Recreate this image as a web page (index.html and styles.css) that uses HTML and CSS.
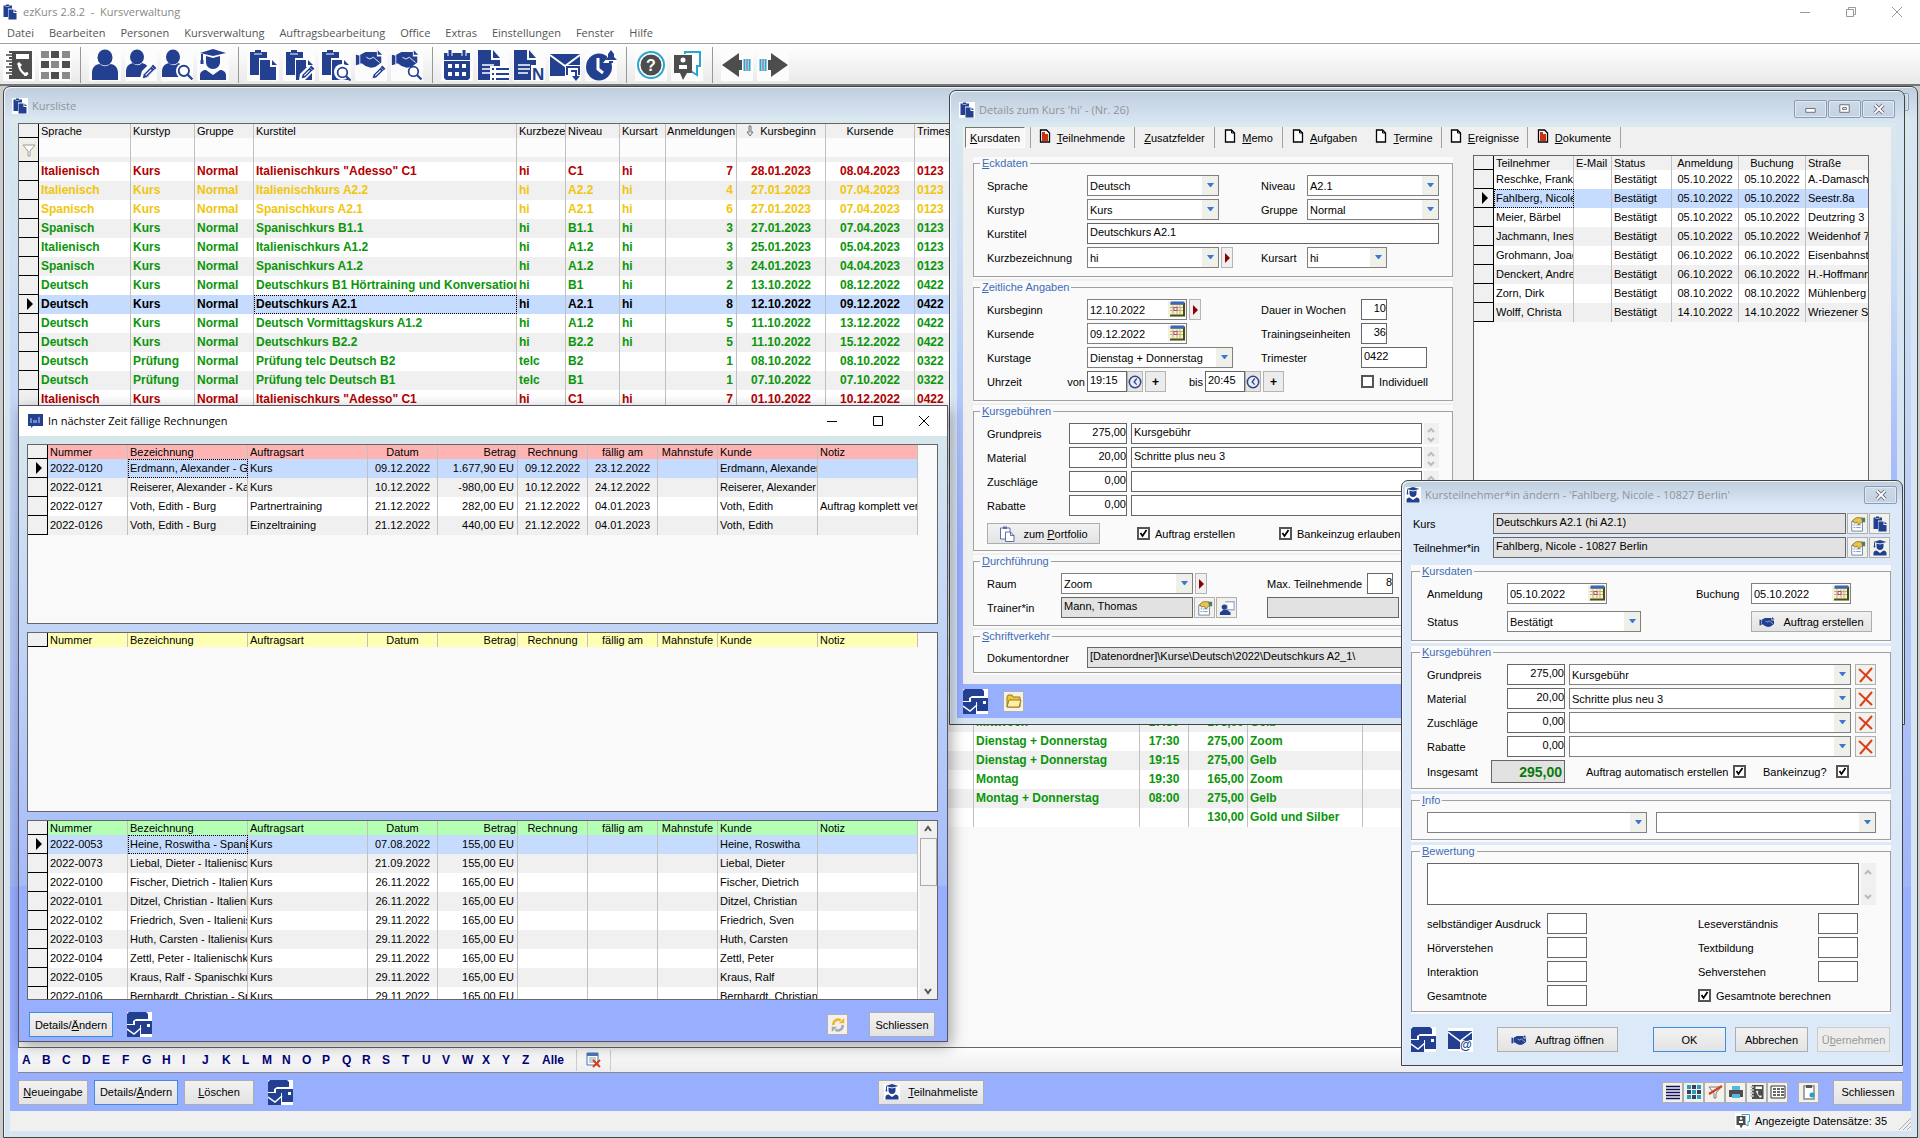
FILE: index.html
```html
<!DOCTYPE html>
<html lang="de">
<head>
<meta charset="utf-8">
<title>ezKurs 2.8.2 - Kursverwaltung</title>
<link rel="stylesheet" href="styles.css">
</head>
<body>
<svg class="defs" aria-hidden="true">
  <symbol id="i-book" viewBox="0 0 32 32"><path fill="#4d4d4d" d="M6 2h23v28H6z"/><path fill="#fff" d="M13 5h13v5H13z"/><path d="M3 6h6M3 12h6M3 18h6M3 24h6" stroke="#fff" stroke-width="4"/><path d="M3 6h6M3 12h6M3 18h6M3 24h6" stroke="#777" stroke-width="2"/><path d="M16 14c-1 4 3 11 8 12" stroke="#fff" stroke-width="2" fill="none"/><path d="M15 14l3 3M21 26l4-2" stroke="#fff" stroke-width="3"/></symbol>
  <symbol id="i-tiles" viewBox="0 0 32 32"><g fill="#8a8a8a"><path d="M2 2h8v7H2zM23 2h8v7h-8zM12 12h8v7h-8zM2 23h8v7H2zM23 23h8v7h-8z"/></g><g fill="#4d4d4d"><path d="M12 2h8v7h-8zM2 12h8v7H2zM23 12h8v7h-8zM12 23h8v7h-8z"/></g></symbol>
  <symbol id="i-person" viewBox="0 0 32 32"><g fill="#233f8f"><ellipse cx="16" cy="8.500" rx="7.500" ry="8"/><path d="M3 31V24c0-6 4-9 8-9 3 3 7 3 10 0 4 0 8 3 8 9v7z"/></g></symbol>
  <symbol id="i-pencil" viewBox="0 0 14 14"><path d="M1 13l1-4 7-7 3 3-7 7z" fill="#233f8f" stroke="#fff" stroke-width=".8"/><path d="M4 10l5-5" stroke="#fff" stroke-width="1"/><path d="M9 2l3 3 1.500-1.500-3-3z" fill="#233f8f"/></symbol>
  <symbol id="i-lens" viewBox="0 0 14 14"><circle cx="6" cy="6" r="4.500" fill="#fff" stroke="#233f8f" stroke-width="1.600"/><path d="M9.500 9.500l4 4" stroke="#233f8f" stroke-width="2"/></symbol>
  <symbol id="i-person-edit" viewBox="0 0 32 32"><g fill="#233f8f"><ellipse cx="12" cy="8" rx="7" ry="7.500"/><path d="M1 28v-5c0-6 3-8 7-9 3 3 6 3 9 0 4 1 7 3 7 8v6z"/></g><path d="M15 29l2-7 9-9 6 5-10 11z" fill="#fff"/><use href="#i-pencil" x="16" y="15" width="16" height="16"/></symbol>
  <symbol id="i-person-search" viewBox="0 0 32 32"><g fill="#233f8f"><ellipse cx="12" cy="8" rx="7" ry="7.500"/><path d="M1 28v-5c0-6 3-8 7-9 3 3 6 3 9 0 4 1 7 3 7 8v6z"/></g><circle cx="23" cy="22" r="8" fill="#fff"/><use href="#i-lens" x="16" y="15" width="16" height="16"/></symbol>
  <symbol id="i-grad" viewBox="0 0 32 32"><g fill="#233f8f"><path d="M16 0L3 4l13 3 13-3zM9 7v6c0 4 3 7 7 7s7-3 7-7V7l-7 2zM3 31v-5c0-3 3-5 6-5l7 5 7-5c3 0 6 2 6 5v5z"/><path d="M4 5h2v7H4zM3.500 11h3v4h-3z"/></g></symbol>
  <symbol id="i-clips" viewBox="0 0 32 32"><g fill="#233f8f"><path d="M3 3h5V1h6v2h6v6h-8v17H3z"/><path d="M13 11h10v7h6v13H13zM25 11l5 5h-5z"/></g><path d="M7 5h8" stroke="#fff"/></symbol>
  <symbol id="i-clips-line" viewBox="0 0 32 32"><g fill="#fff" stroke="#5a70ab" stroke-width="2"><path d="M3 4h19v22H3z"/><path d="M13 12h10l7 7v12H13zM23 12v7h7"/></g><path d="M8 1h8v5H8z" fill="#5a70ab"/></symbol>
  <symbol id="i-clips-edit" viewBox="0 0 32 32"><use href="#i-clips"/><path d="M16 31l1-6 9-9 6 5-10 10z" fill="#fff"/><use href="#i-pencil" x="17" y="16" width="15" height="15"/></symbol>
  <symbol id="i-clips-search" viewBox="0 0 32 32"><use href="#i-clips"/><circle cx="23" cy="23" r="8" fill="#fff"/><use href="#i-lens" x="17" y="17" width="15" height="15"/></symbol>
  <symbol id="i-hands" viewBox="0 0 32 20"><g fill="#233f8f"><path d="M1 5l4 1v10l-4 1z"/><path d="M6 5l6-3 5 0 8 0v5h5v7l-4 3-3 2-5 1-6-2-4-3H6z"/><path d="M26 0l5 5h-5z"/></g><path d="M13 8l4 2 4-2 7 6" stroke="#fff" stroke-width="1" fill="none"/></symbol>
  <symbol id="i-hands-edit" viewBox="0 0 32 32"><use href="#i-hands" x="0" y="0" width="28" height="20"/><use href="#i-pencil" x="16" y="16" width="15" height="15"/></symbol>
  <symbol id="i-hands-search" viewBox="0 0 32 32"><use href="#i-hands" x="0" y="0" width="28" height="20"/><use href="#i-lens" x="16" y="16" width="15" height="15"/></symbol>
  <symbol id="i-cal" viewBox="0 0 32 32"><path d="M3 4h26v7H3zM3 12h26v17l-2 2H5l-2-2z" fill="#233f8f"/><path d="M9 0v7M23 0v7" stroke="#fff" stroke-width="5"/><path d="M9 1v6M23 1v6" stroke="#233f8f" stroke-width="3"/><path fill="#fff" d="M7 15h4v4H7zM14 15h4v4h-4zM21 15h4v4h-4zM7 23h4v4H7zM14 23h4v4h-4zM21 23h4v4h-4z"/></symbol>
  <symbol id="i-doc" viewBox="0 0 32 32"><path fill="#233f8f" d="M1 1h13v10h9v20H1zM16 1l7 8h-7z"/><path d="M5 16h12M5 20h12M5 24h10" stroke="#fff" stroke-width="1.500"/></symbol>
  <symbol id="i-doc-list" viewBox="0 0 32 32"><use href="#i-doc"/><path fill="#fff" d="M13 17h19v15H13z"/><path d="M19 20h13M19 25h13M19 30h13" stroke="#233f8f" stroke-width="2"/><path d="M15 20h2M15 25h2M15 30h2" stroke="#233f8f" stroke-width="2"/></symbol>
  <symbol id="i-doc-n" viewBox="0 0 32 32"><use href="#i-doc"/><path fill="#fff" d="M18 16h14v16H18z"/><text x="19" y="31" font-family="Liberation Sans" font-weight="bold" font-size="17" fill="#233f8f">N</text></symbol>
  <symbol id="i-mail-cal" viewBox="0 0 32 32"><path fill="#233f8f" d="M1 5h30v22H1z"/><path d="M1 6l15 11L31 6" stroke="#fff" stroke-width="2" fill="none"/><path fill="#fff" d="M16 16h16v16H16z"/><path d="M18 26v-8h12v8M22 22h5v7" stroke="#233f8f" stroke-width="2" fill="none"/><path d="M23 27h8l-4 5z" fill="#233f8f"/></symbol>
  <symbol id="i-clock-bell" viewBox="0 0 32 32"><ellipse cx="14" cy="18" rx="13" ry="13.500" fill="#233f8f"/><path d="M13 9v11l5 4" stroke="#fff" stroke-width="3" fill="none"/><path d="M18 14l4-5V4l4-4 4 4v5l2 5z" fill="#fff"/><path d="M20 11l3-3V5l3-4 3 4v3l3 3zM24 12h4v2h-4z" fill="#233f8f"/></symbol>
  <symbol id="i-help" viewBox="0 0 32 32"><circle cx="16" cy="16" r="13" fill="#fff" stroke="#2ca6cf" stroke-width="2"/><circle cx="16" cy="16" r="10.500" fill="#4d4d4d"/><text x="16" y="22" text-anchor="middle" font-family="Liberation Sans" font-weight="bold" font-size="16" fill="#fff">?</text></symbol>
  <symbol id="i-chat" viewBox="0 0 32 32"><path d="M14 5V3h15v14h-3v9l-8-5" fill="#fff" stroke="#2ca6cf" stroke-width="2"/><path d="M3 6h18v18h-5l-4 7-3-7H3z" fill="#4d4d4d"/><circle cx="12" cy="11" r="2.500" fill="#fff"/><path d="M8 20v-4h8v4z" fill="#fff"/></symbol>
  <symbol id="i-left" viewBox="0 0 32 32"><path d="M1 16L18 4v7h3v10h-3v7z" fill="#4d4d4d"/><path d="M23.500 10v12M28.500 10v12" stroke="#2ca6cf" stroke-width="2"/><path d="M26 10v12" stroke="#247" stroke-width="1"/></symbol>
  <symbol id="i-right" viewBox="0 0 32 32"><path d="M31 16L14 4v7h-3v10h3v7z" fill="#4d4d4d"/><path d="M8.500 10v12M3.500 10v12" stroke="#2ca6cf" stroke-width="2"/><path d="M6 10v12" stroke="#247" stroke-width="1"/></symbol>
  <symbol id="i-cards" viewBox="0 0 25 25"><path fill="#fff" d="M0 0h25v25H0z"/><path fill="#233f8f" d="M2 0h17l2 2v5H9L6 9v3H0V2zM8 9h17v13H14v-9H8zM0 13h13v12H0z"/><path fill="#fff" d="M20 12h3v3h-3z"/><path d="M0 17l7 5 7-6" stroke="#fff" stroke-width="1.500" fill="none"/></symbol>
  <symbol id="i-mail-at" viewBox="0 0 25 25"><path fill="#fff" d="M0 1h25v23H0z"/><path fill="#233f8f" d="M0 4h24v18H0z"/><path d="M0 5l12 9 12-9" stroke="#fff" stroke-width="1.500" fill="none"/><path fill="#fff" d="M12 13h13v12H12z"/><text x="12" y="22" font-family="Liberation Sans" font-weight="bold" font-size="12" fill="#233f8f">@</text></symbol>
  <symbol id="i-page" viewBox="0 0 12 14"><path fill="#fff" stroke="#000" stroke-width="1.300" d="M1.500 1h6l3 3v9h-9z"/><path d="M7.500 1v3h3" fill="none" stroke="#000"/></symbol>
  <symbol id="i-page-red" viewBox="0 0 12 14"><path fill="#fff" stroke="#000" stroke-width="1.300" d="M1.500 1h6l3 3v9h-9z"/><path d="M3 3h3v2h3v7H3z" fill="#c8320f"/></symbol>
  <symbol id="i-datepick" viewBox="0 0 16 15"><path fill="#4b4b18" d="M2 1h14v14H1z"/><path fill="#f5f3c9" d="M1 3h13v10H0z"/><path fill="#3a68b8" d="M2 0h13v3H1z"/><path d="M1 6h13M1 9h13M4 4v9M8 4v9M11 4v9" stroke="#b9b37a"/><path d="M5 6h3v3H5z" fill="#fff" stroke="#c2378c"/></symbol>
  <symbol id="i-clock" viewBox="0 0 16 16"><circle cx="8" cy="8" r="6.500" fill="#e8edfb" stroke="#3a4580" stroke-width="1.800"/><path d="M10 4L7 8l3 3" stroke="#3a4580" stroke-width="1.500" fill="none"/></symbol>
  <symbol id="i-hand-form" viewBox="0 0 18 18"><path fill="#fff" stroke="#5b7fa8" d="M2 6h12v11H2z"/><path d="M4 10h2M7 10h5M4 13h2M7 13h5" stroke="#6d8fc0"/><path fill="#e9c54c" stroke="#6e5a18" stroke-width=".8" d="M3 5l4-3h6l1 4-4 4-2-3-3 1z"/><path fill="#4c7d68" d="M13 2h4v5h-3z"/></symbol>
  <symbol id="i-trainer" viewBox="0 0 18 18"><path fill="#fff" stroke="#9fb2da" stroke-width="1.500" d="M7 2h10v9H9V5"/><circle cx="6" cy="8" r="3" fill="#233f8f"/><path fill="#233f8f" d="M1 17v-3l4-3h4l4 3v3z"/></symbol>
  <symbol id="i-folder" viewBox="0 0 16 14"><path fill="#f0c63c" stroke="#a07b10" d="M1 3l1-2h4l1 2h7v10H1z"/><path fill="#fdf0a6" stroke="#a07b10" d="M3 6h12l-2 7H1z"/></symbol>
  <symbol id="i-x" viewBox="0 0 16 16"><path d="M1 2l13 12M14 1L2 15" stroke="#d8401c" stroke-width="2" fill="none"/></symbol>
  <symbol id="i-refresh" viewBox="0 0 16 18"><path d="M3 9a5 5 0 0 1 8-5" stroke="#eeb52d" stroke-width="3" fill="none"/><path d="M9 7h6V1z" fill="#eeb52d"/><path d="M13 9a5 5 0 0 1-8 5" stroke="#a3abb3" stroke-width="3" fill="none"/><path d="M7 11H1v6z" fill="#a3abb3"/></symbol>
  <symbol id="i-listdel" viewBox="0 0 16 16"><path fill="#fff" stroke="#4d74b8" d="M1 1h11v12H1z"/><path fill="#4d74b8" d="M1 1h11v3H1z"/><path d="M3 6h7M3 8h7M3 10h7" stroke="#8aa"/><path d="M7 8l7 7M14 8l-7 7" stroke="#d8401c" stroke-width="2"/></symbol>
  <symbol id="i-lines" viewBox="0 0 16 16"><path d="M1 2.500h14M1 5.500h14M1 8.500h14M1 11.500h14M1 14.500h14" stroke="#10105a" stroke-width="1.500"/></symbol>
  <symbol id="i-dots" viewBox="0 0 16 16"><g fill="#2a9cc4"><path d="M1 1h4v4H1zM11 1h4v4h-4zM6 6h4v4H6zM1 11h4v4H1zM11 11h4v4h-4z"/></g><g fill="#345"><path d="M6 1h4v4H6zM1 6h4v4H1zM11 6h4v4h-4zM6 11h4v4H6z"/></g></symbol>
  <symbol id="i-filter" viewBox="0 0 16 16"><path d="M2 3h12l-5 6v5H7V9z" fill="#fff" stroke="#9a9a9a"/></symbol>
  <symbol id="i-nofilter" viewBox="0 0 16 16"><path d="M2 3h12l-5 6v5H7V9z" fill="#fff" stroke="#777"/><path d="M2 10L15 2" stroke="#d8401c" stroke-width="2.500"/></symbol>
  <symbol id="i-print" viewBox="0 0 16 16"><path fill="#4d4d4d" d="M1 6h14v7H1z"/><path fill="#56b7dc" d="M4 2h8v4H4zM4 10h8v4H4z"/></symbol>
  <symbol id="i-table" viewBox="0 0 16 16"><path fill="#fff" stroke="#333" d="M1 2h14v12H1z"/><path d="M3 5h3M7 5h3M11 5h3M3 8h3M7 8h3M11 8h3M3 11h3M7 11h3M11 11h3" stroke="#333" stroke-width="1.500"/></symbol>
  <symbol id="i-clip1" viewBox="0 0 16 16"><path fill="#fff" stroke="#8a8a8a" stroke-width="1.500" d="M3 2h10v13H3z"/><path fill="#555" d="M5 1h6v3H5z"/><circle cx="11" cy="11" r="2.500" fill="#2a9cc4"/></symbol>
  <symbol id="i-app" viewBox="0 0 16 16"><path fill="#233f8f" d="M1 1h15v12H6l-2 2v-2H1z"/><path d="M4 5v5M7 7v3M9 7v3M12 4v6" stroke="#c9d4f4"/></symbol>
  <symbol id="i-chevs" viewBox="0 0 15 42"><path d="M4 11l3-3 3 3M4 32l3 3 3-3" stroke="#bbb" stroke-width="2" fill="none"/></symbol>
  <symbol id="i-chevs-s" viewBox="0 0 15 21"><path d="M4 9l3-3 3 3M4 15l3 3 3-3" stroke="#bbb" stroke-width="2" fill="none"/></symbol>
  <symbol id="i-min" viewBox="0 0 32 17"><path d="M11 8h10v4H11z" fill="#fff" stroke="#667"/></symbol>
  <symbol id="i-max" viewBox="0 0 32 17"><path d="M11 4h10v8H11z" fill="#fff" stroke="#667"/><path d="M14 7h4v2h-4z" fill="#fff" stroke="#667"/></symbol>
  <symbol id="i-close" viewBox="0 0 32 17"><path d="M12 4l9 9M21 4l-9 9" stroke="#667" stroke-width="4"/><path d="M12 4l9 9M21 4l-9 9" stroke="#fff" stroke-width="2"/></symbol>
  <symbol id="i-tri" viewBox="0 0 6 12"><path d="M0 0l6 6-6 6z"/></symbol>
</svg>

<header class="app-title">
  <svg class="ic16"><use href="#i-clips"/></svg>
  <span class="app-name">ezKurs 2.8.2 &nbsp;- &nbsp;Kursverwaltung</span>
  <button class="sys" aria-label="Minimieren"><svg viewBox="0 0 10 10"><path d="M0 5.500h10"/></svg></button>
  <button class="sys" aria-label="Wiederherstellen"><svg viewBox="0 0 10 10"><path d="M.5 2.500h7v7h-7zM2.500 2V.5h7v7H8"/></svg></button>
  <button class="sys" aria-label="Beenden"><svg viewBox="0 0 10 10"><path d="M0 0l10 10M10 0L0 10"/></svg></button>
</header>
<nav class="menu">
  <a href="#">Datei</a><a href="#">Bearbeiten</a><a href="#">Personen</a><a href="#">Kursverwaltung</a><a href="#">Auftragsbearbeitung</a><a href="#">Office</a><a href="#">Extras</a><a href="#">Einstellungen</a><a href="#">Fenster</a><a href="#">Hilfe</a>
</nav>
<div class="toolbar">
  <button aria-label="Adressbuch"><svg><use href="#i-book"/></svg></button>
  <button aria-label="Übersicht"><svg><use href="#i-tiles"/></svg></button>
  <i class="sep"></i>
  <button aria-label="Person"><svg><use href="#i-person"/></svg></button>
  <button aria-label="Person ändern"><svg><use href="#i-person-edit"/></svg></button>
  <button aria-label="Person suchen"><svg><use href="#i-person-search"/></svg></button>
  <button aria-label="Teilnehmer"><svg><use href="#i-grad"/></svg></button>
  <i class="sep"></i>
  <button aria-label="Kurse"><svg><use href="#i-clips"/></svg></button>
  <button aria-label="Kurs ändern"><svg><use href="#i-clips-edit"/></svg></button>
  <button aria-label="Kurs suchen"><svg><use href="#i-clips-search"/></svg></button>
  <button aria-label="Auftrag ändern"><svg><use href="#i-hands-edit"/></svg></button>
  <button aria-label="Auftrag suchen"><svg><use href="#i-hands-search"/></svg></button>
  <i class="sep"></i>
  <button aria-label="Kalender"><svg><use href="#i-cal"/></svg></button>
  <button aria-label="Liste"><svg><use href="#i-doc-list"/></svg></button>
  <button aria-label="Notiz"><svg><use href="#i-doc-n"/></svg></button>
  <button aria-label="Nachricht"><svg><use href="#i-mail-cal"/></svg></button>
  <button aria-label="Erinnerung"><svg><use href="#i-clock-bell"/></svg></button>
  <i class="sep"></i>
  <button aria-label="Hilfe"><svg><use href="#i-help"/></svg></button>
  <button aria-label="Info"><svg><use href="#i-chat"/></svg></button>
  <i class="sep"></i>
  <button aria-label="Zurück"><svg><use href="#i-left"/></svg></button>
  <button aria-label="Vor"><svg><use href="#i-right"/></svg></button>
</div>

<main class="desktop">
  <section class="win list">
    <div class="caption"><svg class="ic16 white"><use href="#i-clips"/></svg><h2>Kursliste</h2>
      <button class="cap" aria-label="Minimieren"><svg><use href="#i-min"/></svg></button><button class="cap" aria-label="Maximieren"><svg><use href="#i-max"/></svg></button><button class="cap" aria-label="Schließen"><svg><use href="#i-close"/></svg></button></div>
    <div class="list-client">
      <div class="grid-box list-box">
        <table class="grid courses">
          <colgroup><col class="k0"><col class="k1"><col class="k2"><col class="k3"><col class="k4"><col class="k5"><col class="k6"><col class="k7"><col class="k8"><col class="k9"><col class="k9"><col class="k3"><col class="k12"><col class="k5"><col class="k3"><col class="k15"><col></colgroup>
          <thead>
            <tr><th class="ind"></th><th>Sprache</th><th>Kurstyp</th><th>Gruppe</th><th>Kurstitel</th><th>Kurzbeze</th><th>Niveau</th><th>Kursart</th><th class="r">Anmeldungen</th><th class="c"><svg class="sort" viewBox="0 0 8 12"><path d="M3 1h2v6h2l-3 4-3-4h2z"/></svg>Kursbeginn</th><th class="c">Kursende</th><th>Trimes</th><th></th><th></th><th></th><th></th><th></th></tr>
            <tr class="filter"><td class="ind"><svg class="ic16 cream"><use href="#i-filter"/></svg></td><td></td><td></td><td></td><td></td><td></td><td></td><td></td><td></td><td></td><td></td><td></td><td></td><td></td><td></td><td></td><td></td></tr>
          </thead>
          <tbody>
            <tr class="red"><td class="ind"></td><td>Italienisch</td><td>Kurs</td><td>Normal</td><td>Italienischkurs "Adesso" C1</td><td>hi</td><td>C1</td><td>hi</td><td class="r">7</td><td class="c">28.01.2023</td><td class="c">08.04.2023</td><td>0123</td><td></td><td></td><td></td><td></td><td></td></tr>
            <tr class="yel"><td class="ind"></td><td>Italienisch</td><td>Kurs</td><td>Normal</td><td>Italienischkurs A2.2</td><td>hi</td><td>A2.2</td><td>hi</td><td class="r">4</td><td class="c">27.01.2023</td><td class="c">07.04.2023</td><td>0123</td><td></td><td></td><td></td><td></td><td></td></tr>
            <tr class="yel"><td class="ind"></td><td>Spanisch</td><td>Kurs</td><td>Normal</td><td>Spanischkurs A2.1</td><td>hi</td><td>A2.1</td><td>hi</td><td class="r">6</td><td class="c">27.01.2023</td><td class="c">07.04.2023</td><td>0123</td><td></td><td></td><td></td><td></td><td></td></tr>
            <tr><td class="ind"></td><td>Spanisch</td><td>Kurs</td><td>Normal</td><td>Spanischkurs B1.1</td><td>hi</td><td>B1.1</td><td>hi</td><td class="r">3</td><td class="c">27.01.2023</td><td class="c">07.04.2023</td><td>0123</td><td></td><td></td><td></td><td></td><td></td></tr>
            <tr><td class="ind"></td><td>Italienisch</td><td>Kurs</td><td>Normal</td><td>Italienischkurs A1.2</td><td>hi</td><td>A1.2</td><td>hi</td><td class="r">3</td><td class="c">25.01.2023</td><td class="c">05.04.2023</td><td>0123</td><td></td><td></td><td></td><td></td><td></td></tr>
            <tr><td class="ind"></td><td>Spanisch</td><td>Kurs</td><td>Normal</td><td>Spanischkurs A1.2</td><td>hi</td><td>A1.2</td><td>hi</td><td class="r">3</td><td class="c">24.01.2023</td><td class="c">04.04.2023</td><td>0123</td><td></td><td></td><td></td><td></td><td></td></tr>
            <tr><td class="ind"></td><td>Deutsch</td><td>Kurs</td><td>Normal</td><td>Deutschkurs B1 Hörtraining und Konversation</td><td>hi</td><td>B1</td><td>hi</td><td class="r">2</td><td class="c">13.10.2022</td><td class="c">08.12.2022</td><td>0422</td><td></td><td></td><td></td><td></td><td></td></tr>
            <tr class="sel"><td class="ind"><svg class="tri"><use href="#i-tri"/></svg></td><td>Deutsch</td><td>Kurs</td><td>Normal</td><td class="focus">Deutschkurs A2.1</td><td>hi</td><td>A2.1</td><td>hi</td><td class="r">8</td><td class="c">12.10.2022</td><td class="c">09.12.2022</td><td>0422</td><td></td><td></td><td></td><td></td><td></td></tr>
            <tr><td class="ind"></td><td>Deutsch</td><td>Kurs</td><td>Normal</td><td>Deutsch Vormittagskurs A1.2</td><td>hi</td><td>A1.2</td><td>hi</td><td class="r">5</td><td class="c">11.10.2022</td><td class="c">13.12.2022</td><td>0422</td><td></td><td></td><td></td><td></td><td></td></tr>
            <tr><td class="ind"></td><td>Deutsch</td><td>Kurs</td><td>Normal</td><td>Deutschkurs B2.2</td><td>hi</td><td>B2.2</td><td>hi</td><td class="r">5</td><td class="c">11.10.2022</td><td class="c">15.12.2022</td><td>0422</td><td></td><td></td><td></td><td></td><td></td></tr>
            <tr><td class="ind"></td><td>Deutsch</td><td>Prüfung</td><td>Normal</td><td>Prüfung telc Deutsch B2</td><td>telc</td><td>B2</td><td></td><td class="r">1</td><td class="c">08.10.2022</td><td class="c">08.10.2022</td><td>0322</td><td></td><td></td><td></td><td></td><td></td></tr>
            <tr><td class="ind"></td><td>Deutsch</td><td>Prüfung</td><td>Normal</td><td>Prüfung telc Deutsch B1</td><td>telc</td><td>B1</td><td></td><td class="r">1</td><td class="c">07.10.2022</td><td class="c">07.10.2022</td><td>0322</td><td></td><td></td><td></td><td></td><td></td></tr>
            <tr class="red"><td class="ind"></td><td>Italienisch</td><td>Kurs</td><td>Normal</td><td>Italienischkurs "Adesso" C1</td><td>hi</td><td>C1</td><td>hi</td><td class="r">7</td><td class="c">01.10.2022</td><td class="c">10.12.2022</td><td>0422</td><td></td><td></td><td></td><td></td><td></td></tr>
            <tr><td class="ind"></td><td colspan="16"></td></tr>
            <tr><td class="ind"></td><td colspan="16"></td></tr>
            <tr><td class="ind"></td><td colspan="16"></td></tr>
            <tr><td class="ind"></td><td colspan="16"></td></tr>
            <tr><td class="ind"></td><td colspan="16"></td></tr>
            <tr><td class="ind"></td><td colspan="16"></td></tr>
            <tr><td class="ind"></td><td colspan="16"></td></tr>
            <tr><td class="ind"></td><td colspan="16"></td></tr>
            <tr><td class="ind"></td><td colspan="16"></td></tr>
            <tr><td class="ind"></td><td colspan="16"></td></tr>
            <tr><td class="ind"></td><td colspan="16"></td></tr>
            <tr><td class="ind"></td><td colspan="16"></td></tr>
            <tr><td class="ind"></td><td colspan="16"></td></tr>
            <tr><td class="ind"></td><td colspan="16"></td></tr>
            <tr><td class="ind"></td><td colspan="16"></td></tr>
            <tr><td class="ind"></td><td colspan="16"></td></tr>
            <tr><td class="ind"></td><td colspan="11"></td><td>Mittwoch</td><td class="c">17:30</td><td class="r">175,00</td><td>Gelb</td><td></td></tr>
            <tr><td class="ind"></td><td colspan="11"></td><td>Dienstag + Donnerstag</td><td class="c">17:30</td><td class="r">275,00</td><td>Zoom</td><td></td></tr>
            <tr><td class="ind"></td><td colspan="11"></td><td>Dienstag + Donnerstag</td><td class="c">19:15</td><td class="r">275,00</td><td>Gelb</td><td></td></tr>
            <tr><td class="ind"></td><td colspan="11"></td><td>Montag</td><td class="c">19:30</td><td class="r">165,00</td><td>Zoom</td><td></td></tr>
            <tr><td class="ind"></td><td colspan="11"></td><td>Montag + Donnerstag</td><td class="c">08:00</td><td class="r">275,00</td><td>Gelb</td><td></td></tr>
            <tr><td class="ind"></td><td colspan="11"></td><td></td><td></td><td class="r">130,00</td><td>Gold und Silber</td><td></td></tr>
          </tbody>
        </table>
      </div>
      <div class="abc">
        <a href="#">A</a><a href="#">B</a><a href="#">C</a><a href="#">D</a><a href="#">E</a><a href="#">F</a><a href="#">G</a><a href="#">H</a><a href="#">I</a><a href="#">J</a><a href="#">K</a><a href="#">L</a><a href="#">M</a><a href="#">N</a><a href="#">O</a><a href="#">P</a><a href="#">Q</a><a href="#">R</a><a href="#">S</a><a href="#">T</a><a href="#">U</a><a href="#">V</a><a href="#">W</a><a href="#">X</a><a href="#">Y</a><a href="#">Z</a><a class="all" href="#">Alle</a>
        <button class="abc-del" aria-label="Filter löschen"><svg class="ic16"><use href="#i-listdel"/></svg></button>
      </div>
      <div class="list-foot">
        <div class="bar">
          <button class="btn w70"><span><u>N</u>eueingabe</span></button>
          <button class="btn w84 def"><span>Details/<u>Ä</u>ndern</span></button>
          <button class="btn w70"><span><u>L</u>öschen</span></button>
          <button class="flat push" aria-label="Serienbrief"><svg class="ic25"><use href="#i-cards"/></svg></button>
        </div>
        <div class="bar"><button class="btn w106"><svg class="ic16 white"><use href="#i-grad"/></svg><span><u>T</u>eilnahmeliste</span></button></div>
        <div class="bar tools">
          <div class="strip">
            <button class="sq" aria-label="Zeilen"><svg class="ic16"><use href="#i-lines"/></svg></button><button class="sq" aria-label="Kacheln"><svg class="ic16"><use href="#i-dots"/></svg></button><button class="sq" aria-label="Filter aus"><svg class="ic16"><use href="#i-nofilter"/></svg></button><button class="sq" aria-label="Drucken"><svg class="ic16"><use href="#i-print"/></svg></button><button class="sq" aria-label="Adressbuch"><svg class="ic16"><use href="#i-book"/></svg></button><button class="sq" aria-label="Tabelle"><svg class="ic16"><use href="#i-table"/></svg></button>
          </div>
          <button class="sq" aria-label="Kopieren"><svg class="ic16"><use href="#i-clip1"/></svg></button>
          <button class="btn w70 last">Schliessen</button>
        </div>
      </div>
      <div class="status"><svg class="ic16 white"><use href="#i-chat"/></svg><span>Angezeigte Datensätze: 35</span><svg class="grip" viewBox="0 0 12 12"><path d="M0 12L12 0M4 12l8-8M8 12l4-4"/></svg></div>
    </div>
  </section>

  <section class="win details">
    <div class="caption"><svg class="ic16 white"><use href="#i-clips"/></svg><h2>Details zum Kurs 'hi' - (Nr. 26)</h2>
      <button class="cap" aria-label="Minimieren"><svg><use href="#i-min"/></svg></button><button class="cap" aria-label="Maximieren"><svg><use href="#i-max"/></svg></button><button class="cap" aria-label="Schließen"><svg><use href="#i-close"/></svg></button></div>
    <div class="det-client">
      <div class="det-page">
        <div class="tabs">
          <button class="tab on"><span><u>K</u>ursdaten</span></button>
          <button class="tab w105"><svg><use href="#i-page-red"/></svg><span><u>T</u>eilnehmende</span></button>
          <button class="tab w80"><span><u>Z</u>usatzfelder</span></button>
          <button class="tab w68"><svg><use href="#i-page"/></svg><span><u>M</u>emo</span></button>
          <button class="tab w84 open"><svg><use href="#i-page"/></svg><span><u>A</u>ufgaben</span></button>
          <button class="tab w75"><svg><use href="#i-page"/></svg><span><u>T</u>ermine</span></button>
          <button class="tab w86"><svg><use href="#i-page"/></svg><span><u>E</u>reignisse</span></button>
          <button class="tab w93"><svg><use href="#i-page-red"/></svg><span><u>D</u>okumente</span></button>
        </div>
        <div class="det-cols">
          <form class="groups">
            <div class="group"><fieldset class="f-eck"><legend><u>E</u>ckdaten</legend>
              <label for="sprache">Sprache</label><select id="sprache" class="w132"><option>Deutsch</option></select>
              <label for="niveau">Niveau</label><select id="niveau"><option>A2.1</option></select>
              <label for="typ">Kurstyp</label><select id="typ" class="w132"><option>Kurs</option></select>
              <label for="gruppe">Gruppe</label><select id="gruppe"><option>Normal</option></select>
              <label for="titel">Kurstitel</label><input id="titel" class="span3" value="Deutschkurs A2.1">
              <label for="kurz">Kurzbezeichnung</label><div class="cell"><select id="kurz" class="w132"><option>hi</option></select><button type="button" class="go" aria-label="Auswählen"><svg><use href="#i-tri"/></svg></button></div>
              <label for="art">Kursart</label><select id="art" class="w80"><option>hi</option></select>
            </fieldset></div>
            <div class="group"><fieldset class="f-zeit"><legend><u>Z</u>eitliche Angaben</legend>
              <label for="beginn">Kursbeginn</label><div class="cell"><div class="date"><input id="beginn" value="12.10.2022"><svg><use href="#i-datepick"/></svg></div><button type="button" class="go" aria-label="Auswählen"><svg><use href="#i-tri"/></svg></button></div>
              <label for="dauer">Dauer in Wochen</label><input id="dauer" class="num w26" value="10">
              <label for="ende">Kursende</label><div class="date"><input id="ende" value="09.12.2022"><svg><use href="#i-datepick"/></svg></div>
              <label for="te">Trainingseinheiten</label><input id="te" class="num w26" value="36">
              <label for="tage">Kurstage</label><select id="tage" class="w146"><option>Dienstag + Donnerstag</option></select>
              <label for="trim">Trimester</label><input id="trim" class="w66" value="0422">
              <div class="lab2"><span>Uhrzeit</span><label for="von">von</label></div>
              <div class="cell span2"><input id="von" class="w40" value="19:15"><button type="button" class="clk" aria-label="Uhr"><svg><use href="#i-clock"/></svg></button><button type="button" class="plus">+</button><label class="bis" for="bis">bis</label><input id="bis" class="w40" value="20:45"><button type="button" class="clk" aria-label="Uhr"><svg><use href="#i-clock"/></svg></button><button type="button" class="plus">+</button></div>
              <label class="chk"><input type="checkbox">Individuell</label>
            </fieldset></div>
            <div class="group"><fieldset class="f-geb"><legend><u>K</u>ursgebühren</legend>
              <label for="gp">Grundpreis</label><input id="gp" class="num w58" value="275,00"><input class="w291" aria-label="Text Grundpreis" value="Kursgebühr"><svg class="chevs"><use href="#i-chevs-s"/></svg>
              <label for="mat">Material</label><input id="mat" class="num w58" value="20,00"><input class="w291" aria-label="Text Material" value="Schritte plus neu 3"><svg class="chevs"><use href="#i-chevs-s"/></svg>
              <label for="zu">Zuschläge</label><input id="zu" class="num w58" value="0,00"><input class="w291" aria-label="Text Zuschläge"><svg class="chevs"><use href="#i-chevs-s"/></svg>
              <label for="rab">Rabatte</label><input id="rab" class="num w58" value="0,00"><input class="w291" aria-label="Text Rabatte"><svg class="chevs"><use href="#i-chevs-s"/></svg>
              <div class="port"><button type="button" class="btn low w113"><svg class="ic16"><use href="#i-clips-line"/></svg><span>zum <u>P</u>ortfolio</span></button><label class="chk w142"><input type="checkbox" checked>Auftrag erstellen</label><label class="chk"><input type="checkbox" checked>Bankeinzug erlauben</label></div>
            </fieldset></div>
            <div class="group"><fieldset class="f-durch"><legend><u>D</u>urchführung</legend>
              <label for="raum">Raum</label><div class="cell"><select id="raum" class="w132"><option>Zoom</option></select><button type="button" class="go" aria-label="Auswählen"><svg><use href="#i-tri"/></svg></button></div>
              <label for="max">Max. Teilnehmende</label><input id="max" class="num w26" value="8">
              <label for="trainer">Trainer*in</label><div class="cell"><input id="trainer" class="ro w132" readonly value="Mann, Thomas"><button type="button" class="sq" aria-label="Auswählen"><svg class="ic16"><use href="#i-hand-form"/></svg></button><button type="button" class="sq" aria-label="Trainer öffnen"><svg class="ic16"><use href="#i-trainer"/></svg></button></div>
              <input class="ro span2 w132" readonly aria-label="Zweiter Trainer">
            </fieldset></div>
            <div class="group"><fieldset class="f-schrift"><legend><u>S</u>chriftverkehr</legend>
              <label for="ordner">Dokumentordner</label><input id="ordner" class="ro" readonly value="[Datenordner]\Kurse\Deutsch\2022\Deutschkurs A2_1\">
            </fieldset></div>
          </form>
          <div class="grid-box people-box">
            <table class="grid people">
              <colgroup><col class="p0"><col class="p1"><col class="p2"><col class="p3"><col class="p4"><col class="p4"><col></colgroup>
              <thead><tr><th class="ind"></th><th>Teilnehmer</th><th>E-Mail</th><th>Status</th><th class="c">Anmeldung</th><th class="c">Buchung</th><th>Straße</th></tr></thead>
              <tbody>
                <tr><td class="ind"></td><td>Reschke, Frank</td><td></td><td>Bestätigt</td><td class="c">05.10.2022</td><td class="c">05.10.2022</td><td>A.-Damaschke</td></tr>
                <tr class="sel"><td class="ind"><svg class="tri"><use href="#i-tri"/></svg></td><td class="focus">Fahlberg, Nicole</td><td></td><td>Bestätigt</td><td class="c">05.10.2022</td><td class="c">05.10.2022</td><td>Seestr.8a</td></tr>
                <tr><td class="ind"></td><td>Meier, Bärbel</td><td></td><td>Bestätigt</td><td class="c">05.10.2022</td><td class="c">05.10.2022</td><td>Deutzring 3</td></tr>
                <tr><td class="ind"></td><td>Jachmann, Ines</td><td></td><td>Bestätigt</td><td class="c">05.10.2022</td><td class="c">05.10.2022</td><td>Weidenhof 7</td></tr>
                <tr><td class="ind"></td><td>Grohmann, Joac</td><td></td><td>Bestätigt</td><td class="c">06.10.2022</td><td class="c">06.10.2022</td><td>Eisenbahnstr</td></tr>
                <tr><td class="ind"></td><td>Denckert, Andre</td><td></td><td>Bestätigt</td><td class="c">06.10.2022</td><td class="c">06.10.2022</td><td>H.-Hoffmann</td></tr>
                <tr><td class="ind"></td><td>Zorn, Dirk</td><td></td><td>Bestätigt</td><td class="c">08.10.2022</td><td class="c">08.10.2022</td><td>Mühlenberg</td></tr>
                <tr><td class="ind"></td><td>Wolff, Christa</td><td></td><td>Bestätigt</td><td class="c">14.10.2022</td><td class="c">14.10.2022</td><td>Wriezener St</td></tr>
              </tbody>
            </table>
          </div>
        </div>
      </div>
      <div class="det-foot"><button class="flat" aria-label="Serienbrief"><svg class="ic25"><use href="#i-cards"/></svg></button><button class="sq" aria-label="Ordner"><svg class="ic16"><use href="#i-folder"/></svg></button></div>
    </div>
  </section>

  <section class="bills">
    <div class="bills-cap"><svg class="ic16"><use href="#i-app"/></svg><h2>In nächster Zeit fällige Rechnungen</h2>
      <button class="sys dark" aria-label="Minimieren"><svg viewBox="0 0 10 10"><path d="M0 5.500h10"/></svg></button><button class="sys dark" aria-label="Maximieren"><svg viewBox="0 0 10 10"><path d="M.5.5h9v9h-9z"/></svg></button><button class="sys dark" aria-label="Schließen"><svg viewBox="0 0 10 10"><path d="M0 0l10 10M10 0L0 10"/></svg></button></div>
    <div class="bills-client">
      <div class="grid-box bill-box">
        <table class="grid bill pink">
          <colgroup><col class="b0"><col class="b80"><col class="b120"><col class="b120"><col class="b70"><col class="b80"><col class="b70"><col class="b70"><col class="b60"><col class="b100"><col class="b100"></colgroup>
          <thead><tr><th class="ind"></th><th>Nummer</th><th>Bezeichnung</th><th>Auftragsart</th><th class="c">Datum</th><th class="r">Betrag</th><th class="c">Rechnung</th><th class="c">fällig am</th><th class="c">Mahnstufe</th><th>Kunde</th><th>Notiz</th></tr></thead>
          <tbody>
            <tr class="sel"><td class="ind"><svg class="tri"><use href="#i-tri"/></svg></td><td>2022-0120</td><td class="focus">Erdmann, Alexander - Gü</td><td>Kurs</td><td class="c">09.12.2022</td><td class="r">1.677,90 EU</td><td class="c">09.12.2022</td><td class="c">23.12.2022</td><td></td><td>Erdmann, Alexander</td><td></td></tr>
            <tr><td class="ind"></td><td>2022-0121</td><td>Reiserer, Alexander - Ka</td><td>Kurs</td><td class="c">10.12.2022</td><td class="r">-980,00 EU</td><td class="c">10.12.2022</td><td class="c">24.12.2022</td><td></td><td>Reiserer, Alexander</td><td></td></tr>
            <tr><td class="ind"></td><td>2022-0127</td><td>Voth, Edith - Burg</td><td>Partnertraining</td><td class="c">21.12.2022</td><td class="r">282,00 EU</td><td class="c">21.12.2022</td><td class="c">04.01.2023</td><td></td><td>Voth, Edith</td><td>Auftrag komplett ver</td></tr>
            <tr><td class="ind"></td><td>2022-0126</td><td>Voth, Edith - Burg</td><td>Einzeltraining</td><td class="c">21.12.2022</td><td class="r">440,00 EU</td><td class="c">21.12.2022</td><td class="c">04.01.2023</td><td></td><td>Voth, Edith</td><td></td></tr>
          </tbody>
        </table>
      </div>
      <div class="grid-box bill-box">
        <table class="grid bill yellow">
          <colgroup><col class="b0"><col class="b80"><col class="b120"><col class="b120"><col class="b70"><col class="b80"><col class="b70"><col class="b70"><col class="b60"><col class="b100"><col class="b100"></colgroup>
          <thead><tr><th class="ind"></th><th>Nummer</th><th>Bezeichnung</th><th>Auftragsart</th><th class="c">Datum</th><th class="r">Betrag</th><th class="c">Rechnung</th><th class="c">fällig am</th><th class="c">Mahnstufe</th><th>Kunde</th><th>Notiz</th></tr></thead>
        </table>
      </div>
      <div class="grid-box bill-box with-bar">
        <table class="grid bill green">
          <colgroup><col class="b0"><col class="b80"><col class="b120"><col class="b120"><col class="b70"><col class="b80"><col class="b70"><col class="b70"><col class="b60"><col class="b100"><col class="b100"></colgroup>
          <thead><tr><th class="ind"></th><th>Nummer</th><th>Bezeichnung</th><th>Auftragsart</th><th class="c">Datum</th><th class="r">Betrag</th><th class="c">Rechnung</th><th class="c">fällig am</th><th class="c">Mahnstufe</th><th>Kunde</th><th>Notiz</th></tr></thead>
          <tbody>
            <tr class="sel"><td class="ind"><svg class="tri"><use href="#i-tri"/></svg></td><td>2022-0053</td><td class="focus">Heine, Roswitha - Spani</td><td>Kurs</td><td class="c">07.08.2022</td><td class="r">155,00 EU</td><td></td><td></td><td></td><td>Heine, Roswitha</td><td></td></tr>
            <tr><td class="ind"></td><td>2022-0073</td><td>Liebal, Dieter - Italienisch</td><td>Kurs</td><td class="c">21.09.2022</td><td class="r">155,00 EU</td><td></td><td></td><td></td><td>Liebal, Dieter</td><td></td></tr>
            <tr><td class="ind"></td><td>2022-0100</td><td>Fischer, Dietrich - Italieni</td><td>Kurs</td><td class="c">26.11.2022</td><td class="r">165,00 EU</td><td></td><td></td><td></td><td>Fischer, Dietrich</td><td></td></tr>
            <tr><td class="ind"></td><td>2022-0101</td><td>Ditzel, Christian - Italienis</td><td>Kurs</td><td class="c">26.11.2022</td><td class="r">165,00 EU</td><td></td><td></td><td></td><td>Ditzel, Christian</td><td></td></tr>
            <tr><td class="ind"></td><td>2022-0102</td><td>Friedrich, Sven - Italienis</td><td>Kurs</td><td class="c">29.11.2022</td><td class="r">165,00 EU</td><td></td><td></td><td></td><td>Friedrich, Sven</td><td></td></tr>
            <tr><td class="ind"></td><td>2022-0103</td><td>Huth, Carsten - Italienisc</td><td>Kurs</td><td class="c">29.11.2022</td><td class="r">165,00 EU</td><td></td><td></td><td></td><td>Huth, Carsten</td><td></td></tr>
            <tr><td class="ind"></td><td>2022-0104</td><td>Zettl, Peter - Italienischk</td><td>Kurs</td><td class="c">29.11.2022</td><td class="r">165,00 EU</td><td></td><td></td><td></td><td>Zettl, Peter</td><td></td></tr>
            <tr><td class="ind"></td><td>2022-0105</td><td>Kraus, Ralf - Spanischku</td><td>Kurs</td><td class="c">29.11.2022</td><td class="r">165,00 EU</td><td></td><td></td><td></td><td>Kraus, Ralf</td><td></td></tr>
            <tr><td class="ind"></td><td>2022-0106</td><td>Bernhardt, Christian - Sp</td><td>Kurs</td><td class="c">29.11.2022</td><td class="r">165,00 EU</td><td></td><td></td><td></td><td>Bernhardt, Christian</td><td></td></tr>
          </tbody>
        </table>
        <div class="scroll"><svg viewBox="0 0 17 17"><path d="M5 10l3-4 3 4"/></svg><i class="thumb"></i><svg viewBox="0 0 17 17"><path d="M5 7l3 4 3-4"/></svg></div>
      </div>
      <div class="bills-foot">
        <button class="btn w84 def"><span>Details/<u>Ä</u>ndern</span></button>
        <button class="flat push" aria-label="Serienbrief"><svg class="ic25"><use href="#i-cards"/></svg></button>
        <button class="sq right" aria-label="Aktualisieren"><svg class="ic16"><use href="#i-refresh"/></svg></button>
        <button class="btn w66">Schliessen</button>
      </div>
    </div>
  </section>

  <section class="win member">
    <div class="caption"><svg class="ic16 white"><use href="#i-grad"/></svg><h2>Kursteilnehmer*in ändern - 'Fahlberg, Nicole - 10827 Berlin'</h2>
      <button class="cap" aria-label="Schließen"><svg><use href="#i-close"/></svg></button></div>
    <form class="mem-client">
      <div class="mem-top">
        <label for="mkurs">Kurs</label><input id="mkurs" class="ro" readonly value="Deutschkurs A2.1 (hi A2.1)"><button type="button" class="sq" aria-label="Kurs wählen"><svg class="ic16"><use href="#i-hand-form"/></svg></button><button type="button" class="sq" aria-label="Kurs öffnen"><svg class="ic16"><use href="#i-clips"/></svg></button>
        <label for="mtn">Teilnehmer*in</label><input id="mtn" class="ro" readonly value="Fahlberg, Nicole - 10827 Berlin"><button type="button" class="sq" aria-label="Teilnehmer wählen"><svg class="ic16"><use href="#i-hand-form"/></svg></button><button type="button" class="sq" aria-label="Teilnehmer öffnen"><svg class="ic16"><use href="#i-grad"/></svg></button>
      </div>
      <div class="group"><fieldset class="m-daten"><legend><u>K</u>ursdaten</legend>
        <label for="anm">Anmeldung</label><div class="date"><input id="anm" value="05.10.2022"><svg><use href="#i-datepick"/></svg></div>
        <label for="buch">Buchung</label><div class="date"><input id="buch" value="05.10.2022"><svg><use href="#i-datepick"/></svg></div>
        <label for="stat">Status</label><select id="stat" class="w134"><option>Bestätigt</option></select>
        <button type="button" class="btn low w121 col4"><svg class="ic16"><use href="#i-hands"/></svg><span>Auftrag erstellen</span></button>
      </fieldset></div>
      <div class="group"><fieldset class="m-geb"><legend><u>K</u>ursgebühren</legend>
        <label for="mgp">Grundpreis</label><input id="mgp" class="num w58" value="275,00"><select aria-label="Text Grundpreis"><option>Kursgebühr</option></select><button type="button" class="sq" aria-label="Löschen"><svg class="ic16"><use href="#i-x"/></svg></button>
        <label for="mmat">Material</label><input id="mmat" class="num w58" value="20,00"><select aria-label="Text Material"><option>Schritte plus neu 3</option></select><button type="button" class="sq" aria-label="Löschen"><svg class="ic16"><use href="#i-x"/></svg></button>
        <label for="mzu">Zuschläge</label><input id="mzu" class="num w58" value="0,00"><select aria-label="Text Zuschläge"><option></option></select><button type="button" class="sq" aria-label="Löschen"><svg class="ic16"><use href="#i-x"/></svg></button>
        <label for="mrab">Rabatte</label><input id="mrab" class="num w58" value="0,00"><select aria-label="Text Rabatte"><option></option></select><button type="button" class="sq" aria-label="Löschen"><svg class="ic16"><use href="#i-x"/></svg></button>
        <div class="sum"><label for="ges">Insgesamt</label><input id="ges" class="ro total" readonly value="295,00"><label class="auto" for="auto">Auftrag automatisch erstellen</label><input id="auto" type="checkbox" checked><label class="bank" for="bank">Bankeinzug?</label><input id="bank" type="checkbox" checked></div>
      </fieldset></div>
      <div class="group"><fieldset class="m-info"><legend><u>I</u>nfo</legend>
        <select aria-label="Info 1"><option></option></select><select aria-label="Info 2"><option></option></select>
      </fieldset></div>
      <div class="group"><fieldset class="m-bew"><legend><u>B</u>ewertung</legend>
        <div class="memo"><textarea aria-label="Bewertung"></textarea><svg class="chevs"><use href="#i-chevs"/></svg></div>
        <label for="n1">selbständiger Ausdruck</label><input id="n1" class="w40"><label for="n2">Leseverständnis</label><input id="n2" class="w40">
        <label for="n3">Hörverstehen</label><input id="n3" class="w40"><label for="n4">Textbildung</label><input id="n4" class="w40">
        <label for="n5">Interaktion</label><input id="n5" class="w40"><label for="n6">Sehverstehen</label><input id="n6" class="w40">
        <label for="n7">Gesamtnote</label><input id="n7" class="w40"><label class="chk span2"><input type="checkbox" checked>Gesamtnote berechnen</label>
      </fieldset></div>
      <div class="mem-foot">
        <button type="button" class="flat" aria-label="Serienbrief"><svg class="ic25"><use href="#i-cards"/></svg></button>
        <button type="button" class="flat mail" aria-label="E-Mail"><svg class="ic25"><use href="#i-mail-at"/></svg></button>
        <button type="button" class="btn w121"><svg class="ic16"><use href="#i-hands"/></svg><span>Auftrag öffnen</span></button>
        <button type="button" class="btn w73 def ok">OK</button>
        <button type="button" class="btn w73">Abbrechen</button>
        <button type="button" class="btn w73" disabled><span>Ü<u>b</u>ernehmen</span></button>
      </div>
    </form>
  </section>
</main>
</body>
</html>
```
FILE: styles.css
```css
* { box-sizing: border-box; }
html, body { margin: 0; height: 100%; }
body {
  display: flex; flex-direction: column; min-height: 100vh; overflow: hidden;
  font: 11px/14px "Liberation Sans", Arial, sans-serif; color: #000; background: #f0f0f0;
}
button, input, select, textarea { font: inherit; color: inherit; margin: 0; border-radius: 0; }
button { padding: 0; border: 0; background: none; white-space: nowrap; }
svg { display: block; flex: none; }
h2 { margin: 0; font: 11px/16px "Open Sans", "Noto Sans", sans-serif; white-space: nowrap; flex: 1; }
.defs { position: absolute; width: 0; height: 0; }
.ic16 { width: 16px; height: 16px; }
.ic25 { width: 25px; height: 25px; }
.white { background: #fff; }
.cream { background: #f0eee0; }

/* application frame */
.app-title { display: flex; align-items: center; height: 24px; padding-left: 2px; background: #fff; color: #888; }
.app-name { flex: 1; margin-left: 5px; font: 11px/16px "Open Sans", "Noto Sans", sans-serif; }
.sys { width: 46px; height: 20px; display: grid; place-items: center; }
.sys svg { width: 10px; height: 10px; fill: none; stroke: #999; }
.sys.dark svg { stroke: #000; }
.menu { display: flex; gap: 15px; height: 20px; padding-left: 7px; background: #fff; border-bottom: 1px solid #a0a0a0; }
.menu a { color: #555; text-decoration: none; font: 11px/18px "Open Sans", "Noto Sans", sans-serif; }
.toolbar { display: flex; align-items: center; gap: 4px; height: 42px; padding: 2px 0 0 3px; background: linear-gradient(#fff, #e9e9e9); border-bottom: 2px solid #777; }
.toolbar button { width: 32px; height: 32px; background: #fcfcfc; }
.toolbar svg { width: 32px; height: 32px; }
.sep { width: 1px; height: 36px; margin: 0 4px 0 5px; background: #999; }

.desktop { position: relative; flex: 1; display: flex; min-height: 0; padding: 0 2px 0 3px; background: #ccc; }

/* child windows */
.win { border: 1px solid #444; border-radius: 7px 7px 0 0; background: linear-gradient(#bfcedd, #d7e4f2 30px); overflow: hidden; box-shadow: inset 1px 1px 0 #eef4fa; }
.caption { display: flex; align-items: center; gap: 1px; color: #8f9499; }
.caption h2 { margin-left: 3px; }
.cap { width: 33px; height: 18px; border: 1px solid #8a9bb5; border-radius: 2px; background: linear-gradient(#cddae8, #c3d1e1); box-shadow: inset 0 0 0 1px #dfe9f4; }
.cap svg { width: 31px; height: 16px; }

.list { flex: 1; display: flex; flex-direction: column; padding: 0 6px 6px; }
.list .caption { height: 30px; padding: 8px 2px 0; }
.list .cap { margin-top: -8px; }
.list-client { flex: 1; display: flex; flex-direction: column; min-height: 0; background: linear-gradient(#d9e9ec, #cadcf4 200px, #a0b5f8 770px, #98aeff 770px); }
.list-box { flex: 1; min-height: 0; margin: 6px 8px 0; }
.abc { display: flex; align-items: center; height: 25px; margin: 0 8px; background: linear-gradient(#fdfdfd, #eee); border-bottom: 1px solid #888; font-weight: bold; font-size: 12px; }
.abc a { width: 20px; padding-left: 4px; color: #000078; text-decoration: none; }
.abc .all { width: 38px; }
.abc-del { display: grid; place-items: center; width: 35px; height: 21px; border: solid #ccc; border-width: 0 1px; }
.list-foot { display: grid; grid-template-columns: 860px 1fr auto; align-items: center; height: 38px; padding: 0 8px; }
.bar { display: flex; align-items: center; gap: 6px; }
.bar.tools { gap: 10px; }
.tools .last { margin-left: 4px; }
.strip { display: flex; }
.push { margin-left: 8px; }
.status { display: flex; align-items: center; justify-content: flex-end; gap: 4px; height: 20px; background: #f0f0f0; }
.grip { width: 12px; height: 12px; margin: 6px 0 0 8px; stroke: #aaa; stroke-width: 1; }

/* buttons */
.btn { display: inline-flex; align-items: center; justify-content: center; gap: 8px; height: 25px; border: 1px solid #adadad; background: linear-gradient(#f2f2f2, #e3e3e3); }
.btn.def { border-color: #3c8ede; }
.btn.low { height: 21px; }
.btn:disabled { color: #999; border-color: #ccc; background: #ececec; }
.sq { display: grid; place-items: center; width: 21px; height: 21px; border: 1px solid #b0b0b0; background: #f2f1ec; flex: none; }
.go { display: grid; place-items: center; width: 12px; height: 21px; border: 1px solid #b4b4b4; background: #f0f0f0; }
.go svg { width: 5px; height: 10px; fill: #8b0000; }
.clk { width: 16px; height: 21px; border: 1px solid #b4b4b4; background: #e6e6e6; }
.clk svg { width: 14px; height: 16px; }
.plus { width: 21px; height: 21px; margin-left: 2px; border: 1px solid #b4b4b4; background: #ececec; font-weight: bold; font-size: 12px; }

/* grids */
.grid-box { border: 1px solid #666; background: #f9f9f9; overflow: hidden; }
.grid { border-collapse: separate; border-spacing: 0; table-layout: fixed; }
.grid th, .grid td { height: 19px; padding: 0 0 2px 2px; border-right: 1px solid #c0c0c0; overflow: hidden; white-space: nowrap; text-align: left; line-height: 16px; }
.grid th { height: 14px; padding: 0 0 0 2px; font-weight: normal; background: #f0f0f0; line-height: 12px; }
.grid tbody tr { background: #fff; }
.grid tbody tr:nth-child(even) { background: #f0f0f0; }
.grid tbody tr.sel { background: #c5dcff; color: #000; }
.grid td.r { text-align: right; padding-right: 3px; }
.grid th.r { text-align: right; padding: 0 1px 0 0; }
.grid .c { text-align: center; padding-right: 2px; }
.grid .ind { padding: 0; background: #f0f0f0; border-right: 1px solid #000; border-bottom: 1px solid #000; }
.grid .focus { outline: 1px dotted #000; outline-offset: -1px; }
.tri { width: 6px; height: 12px; margin-left: 8px; }
.sort { display: inline-block; width: 8px; height: 12px; margin-right: 6px; vertical-align: top; fill: #ddd; stroke: #777; }
.courses { width: 100%; }
.courses tbody { font-weight: bold; font-size: 12px; color: #0a960a; }
.courses .red { color: #b40000; }
.courses .yel { color: #f0c60c; }
.filter td { height: 24px; background: linear-gradient(#fcfcfc 19px, #f0f0f0 19px); }
.filter .cream { margin: 2px; }
.k0 { width: 20px; } .k1 { width: 92px; } .k2 { width: 64px; } .k3 { width: 59px; } .k4 { width: 263px; }
.k5 { width: 49px; } .k6 { width: 54px; } .k7 { width: 46px; } .k8 { width: 71px; } .k9 { width: 89px; }
.k12 { width: 166px; } .k15 { width: 115px; }
.people { width: 100%; }
.people th:last-child, .people td:last-child { border-right: 0; padding-right: 0; }
.p0 { width: 20px; } .p1 { width: 80px; } .p2 { width: 38px; } .p3 { width: 60px; } .p4 { width: 67px; }
.bill { width: 890px; }
.b0 { width: 20px; } .b60 { width: 60px; } .b70 { width: 70px; } .b80 { width: 80px; } .b100 { width: 100px; } .b120 { width: 120px; }
.pink th:not(.ind) { background: #ffb4b4; }
.yellow th:not(.ind) { background: #ffffb4; }
.green th:not(.ind) { background: #b4ffb4; }

/* course details */
.details { position: absolute; left: 949px; top: 4px; width: 956px; padding: 0 7px 6px; }
.details .caption { height: 32px; padding: 6px 2px 0; }
.details .cap { margin-top: -2px; }
.det-client { padding: 4px 6px 0; background: linear-gradient(#d9e9ec, #cadcf4 150px, #98aeff 430px); }
.det-page { background: #f0f0f0; padding-bottom: 9px; }
.tabs { display: flex; height: 22px; padding-left: 2px; }
.tab { display: flex; align-items: center; justify-content: center; gap: 6px; height: 21px; border-right: 1px solid #a0a0a0; }
.tab svg { width: 12px; height: 14px; margin-top: -4px; }
.tab.on { width: 60px; margin-right: 5px; border: 1px solid #777; border-right-color: #fff; border-bottom-color: #fff; background: #f8f8f8; box-shadow: 5px 0 0 #f0f0f0, 6px 0 0 #a0a0a0; }
.tab.open { border-right-color: transparent; }
.det-cols { display: flex; gap: 20px; padding: 8px 22px 0 10px; }
.groups { width: 480px; display: flex; flex-direction: column; gap: 2px; }
.people-box { flex: 1; margin-top: -2px; }
.det-foot { display: flex; align-items: center; gap: 15px; height: 34px; }

.group { background: #fafafa; padding-bottom: 2px; }
fieldset { display: grid; gap: 3px 0; margin: 0; min-width: 0; border: 1px solid #a0a0a0; padding: 6px 12px 8px 13px; align-items: center; }
legend { margin-left: -7px; padding: 0 2px; color: #3c6cb8; line-height: 13px; height: 12px; }
.f-eck { grid-template-columns: 100px 174px 46px 132px; }
.f-zeit { grid-template-columns: 100px 174px 100px 66px; }
.f-geb { grid-template-columns: 82px 62px 293px 15px; padding-bottom: 6px; }
.f-durch { grid-template-columns: 74px 206px 100px 32px; padding-bottom: 7px; }
.f-schrift { grid-template-columns: 100px 352px; padding-top: 5px; padding-bottom: 4px; }
.cell { display: flex; align-items: center; }
.cell > .go { margin-left: 2px; }
.cell > .sq { margin-left: 1px; }
.span2 { grid-column: span 2; }
.span3 { grid-column: span 3; }
.col4 { grid-column: 4; }
.lab2 { display: flex; justify-content: space-between; padding-right: 2px; }
.bis { width: 39px; padding-left: 23px; }
.port { grid-column: 1 / -1; display: flex; align-items: center; gap: 37px; margin-top: 4px; }
.port .chk + .chk { margin-left: -37px; }

input, select, textarea { height: 21px; min-width: 0; width: 100%; border: 1px solid #666; background: #fff; padding: 0 2px; outline: 0; }
input { padding-bottom: 3px; }
select { appearance: none; border-color: #808080; background: #fff url("data:image/svg+xml,%3Csvg xmlns='http://www.w3.org/2000/svg' width='16' height='19'%3E%3Cpath fill='%23f0f0ea' d='M0 0h16v19H0z'/%3E%3Cpath fill='%233c78d2' d='M5 7h7l-3 4h-1z'/%3E%3C/svg%3E") right top no-repeat; }
textarea { resize: none; height: 42px; display: block; }
.num { text-align: right; padding-right: 0; }
.ro { background: #e2e2e2; }
.date { display: flex; width: 100px; height: 21px; border: 1px solid #808080; background: #fff; }
.date input { border: 0; height: 19px; padding: 0 2px; flex: 1; }
.date svg { width: 18px; height: 16px; padding: 0 1px; background: #f0f0ea; margin-top: 1px; }
input[type=checkbox] { appearance: none; flex: none; width: 13px; height: 13px; padding: 0; border: 2px solid #555; background: #fff; }
input[type=checkbox]:checked { background: #fff url("data:image/svg+xml,%3Csvg xmlns='http://www.w3.org/2000/svg' width='9' height='9'%3E%3Cpath d='M1.500 4l2 3 4-6' fill='none' stroke='%23000' stroke-width='1.800'/%3E%3C/svg%3E") center no-repeat; }
.chk { display: flex; align-items: center; gap: 5px; white-space: nowrap; }
.chevs { width: 15px; height: 21px; background: #f0f0f0; }
.memo .chevs { height: 42px; margin-left: 2px; }

.w26 { width: 26px; } .w40 { width: 40px; } .w58 { width: 58px; } .w66 { width: 66px; } .w68 { width: 68px; }
.w70 { width: 70px; } .w73 { width: 73px; } .w75 { width: 75px; } .w80 { width: 80px; } .w84 { width: 84px; }
.w86 { width: 86px; } .w93 { width: 93px; } .w105 { width: 105px; } .w106 { width: 106px; } .w113 { width: 113px; }
.w121 { width: 121px; } .w132 { width: 132px; } .w134 { width: 134px; } .w142 { width: 142px; } .w146 { width: 146px; }
.w291 { width: 291px; }

/* due invoices */
.bills { position: absolute; left: 18px; top: 319px; width: 930px; border: 1px solid #556; background: #fff; box-shadow: 3px 4px 14px rgba(0, 0, 0, .35); }
.bills-cap { display: flex; align-items: center; height: 30px; padding-left: 8px; }
.bills-cap h2 { margin-left: 5px; }
.bills-client { padding: 8px 9px 0 8px; display: flex; flex-direction: column; gap: 8px; background: linear-gradient(#d6e7ec, #cadcf4 120px, #a6bbfa 450px, #98aeff 450px); }
.bill-box { height: 180px; }
.with-bar { display: flex; justify-content: space-between; align-items: flex-start; }
.scroll { display: flex; flex-direction: column; width: 17px; height: 178px; background: #f0f0f0; }
.scroll svg { width: 17px; height: 17px; fill: none; stroke: #555; stroke-width: 2; }
.thumb { height: 48px; margin-bottom: auto; border: 1px solid #aaa; background: #f4f4f4; }
.bills-foot { display: flex; align-items: center; gap: 6px; height: 33px; padding: 0 3px 0 2px; }
.bills-foot .right { margin: 0 15px 0 auto; }

/* participant */
.member { position: absolute; left: 1401px; top: 394px; width: 502px; background: linear-gradient(#bfcedd, #dbe9f8 26px); }
.member .caption { height: 28px; padding: 0 5px 0 3px; }
.mem-client { display: flex; flex-direction: column; gap: 3px; padding: 4px 11px 13px 9px; }
.mem-top { display: grid; grid-template-columns: 79px 353px 21px 21px; gap: 3px 1px; padding: 0 0 4px 2px; align-items: center; }
.member fieldset { padding-left: 15px; }
.member .m-daten { grid-template-columns: 80px 189px 55px 121px; row-gap: 7px; padding-bottom: 8px; }
.member .m-geb { grid-template-columns: 80px 62px 286px 21px; padding-bottom: 5px; }
.m-geb select { width: 282px; }
.sum { grid-column: 1 / -1; display: flex; align-items: center; }
.sum label:first-child { width: 64px; }
.sum .total { width: 74px; height: 23px; padding-bottom: 0; text-align: right; font-weight: bold; font-size: 14px; color: #0a7a0a; }
.auto { width: 147px; margin: 0 0 0 21px; }
.bank { width: 73px; margin-left: 17px; }
.member .m-info { grid-template-columns: 220px 220px; column-gap: 9px; padding-bottom: 6px; }
.member .m-bew { grid-template-columns: 120px 151px 120px 40px 18px; padding-bottom: 5px; }
.m-bew input.w40:nth-of-type(even) { grid-column: 4 / span 2; }
.memo { grid-column: 1 / -1; display: flex; margin-bottom: 5px; }
.memo textarea { width: 432px; }
.mem-foot { display: flex; align-items: center; gap: 9px; padding-top: 10px; }
.mem-foot .mail { margin: 0 15px 0 3px; }
.mem-foot .ok { margin-left: 26px; }

.btn.w66 { width: 66px; }
```
